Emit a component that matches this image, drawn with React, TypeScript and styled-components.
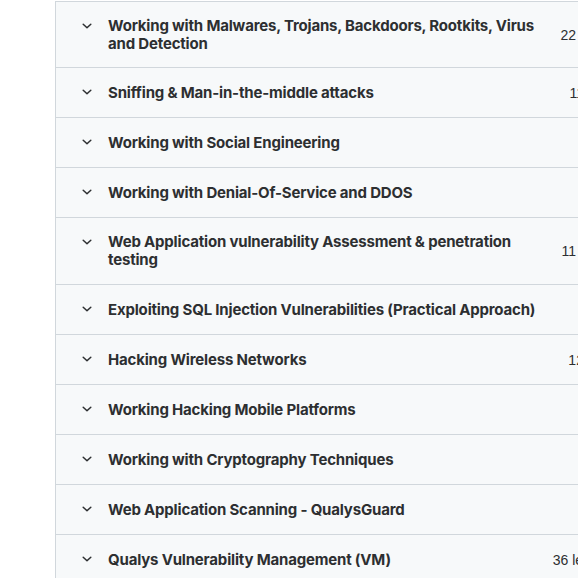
import { type FC } from 'react';
import styled, { createGlobalStyle } from 'styled-components';

const GlobalStyle = createGlobalStyle`
  html, body {
    margin: 0;
    padding: 0;
    background: #ffffff;
    overflow: hidden;
  }
  body {
    font-family: Inter, "Liberation Sans", Arial, sans-serif;
    color: #2d2f31;
  }
`;

type Section = {
  title: string;
  meta: string;
};

const sections: Section[] = [
  { title: 'Working with Malwares, Trojans, Backdoors, Rootkits, Virus and Detection', meta: '22 lectures • 2hr 34min' },
  { title: 'Sniffing & Man-in-the-middle attacks', meta: '11 lectures • 1hr 4min' },
  { title: 'Working with Social Engineering', meta: '6 lectures • 48min' },
  { title: 'Working with Denial-Of-Service and DDOS', meta: '5 lectures • 37min' },
  { title: 'Web Application vulnerability Assessment & penetration testing', meta: '11 lectures • 2hr 12min' },
  { title: 'Exploiting SQL Injection Vulnerabilities (Practical Approach)', meta: '4 lectures • 41min' },
  { title: 'Hacking Wireless Networks', meta: '12 lectures • 1hr 9min' },
  { title: 'Working Hacking Mobile Platforms', meta: '7 lectures • 52min' },
  { title: 'Working with Cryptography Techniques', meta: '5 lectures • 33min' },
  { title: 'Web Application Scanning - QualysGuard', meta: '8 lectures • 46min' },
  { title: 'Qualys Vulnerability Management (VM)', meta: '36 lectures • 12hr 34min' },
];

const Page = styled.div`
  padding-left: 55px;
  padding-top: 1px;
`;

const Curriculum = styled.div`
  width: 672px;
  background: #f7f9fa;
  border-left: 1px solid #d1d7dc;
  border-top: 1px solid #d1d7dc;
`;

const Row = styled.div<{ $first?: boolean }>`
  box-sizing: border-box;
  display: flex;
  align-items: center;
  min-height: 50px;
  padding: 15px 24px ${(p) => (p.$first ? '14px' : '15px')} 25px;
  border-bottom: 1px solid #d1d7dc;
`;

const Chevron = styled.span`
  display: inline-flex;
  align-items: center;
  justify-content: center;
  width: 12px;
  height: 18px;
  margin-right: 15px;
  align-self: flex-start;
  color: #2d2f31;
`;

const Title = styled.div`
  flex: 1;
  font-size: 15px;
  line-height: 18px;
  font-weight: 700;
  letter-spacing: -0.18px;
`;

const Meta = styled.div`
  margin-left: 16px;
  white-space: nowrap;
  font-family: "Liberation Sans", Arial, sans-serif;
  font-size: 14px;
  color: #2d2f31;
`;

const ChevronIcon: FC = () => (
  <svg width="10" height="6" viewBox="0 0 10 6" fill="none">
    <path d="M1.2 1.2l3.8 3.6 3.8-3.6" stroke="currentColor" strokeWidth="1.5" strokeLinecap="round" strokeLinejoin="round" />
  </svg>
);

export default function App() {
  return (
    <>
      <GlobalStyle />
      <Page>
        <Curriculum>
          {sections.map((s, i) => (
            <Row key={s.title} $first={i === 0}>
              <Chevron>
                <ChevronIcon />
              </Chevron>
              <Title>{s.title}</Title>
              <Meta>{s.meta}</Meta>
            </Row>
          ))}
        </Curriculum>
      </Page>
    </>
  );
}
